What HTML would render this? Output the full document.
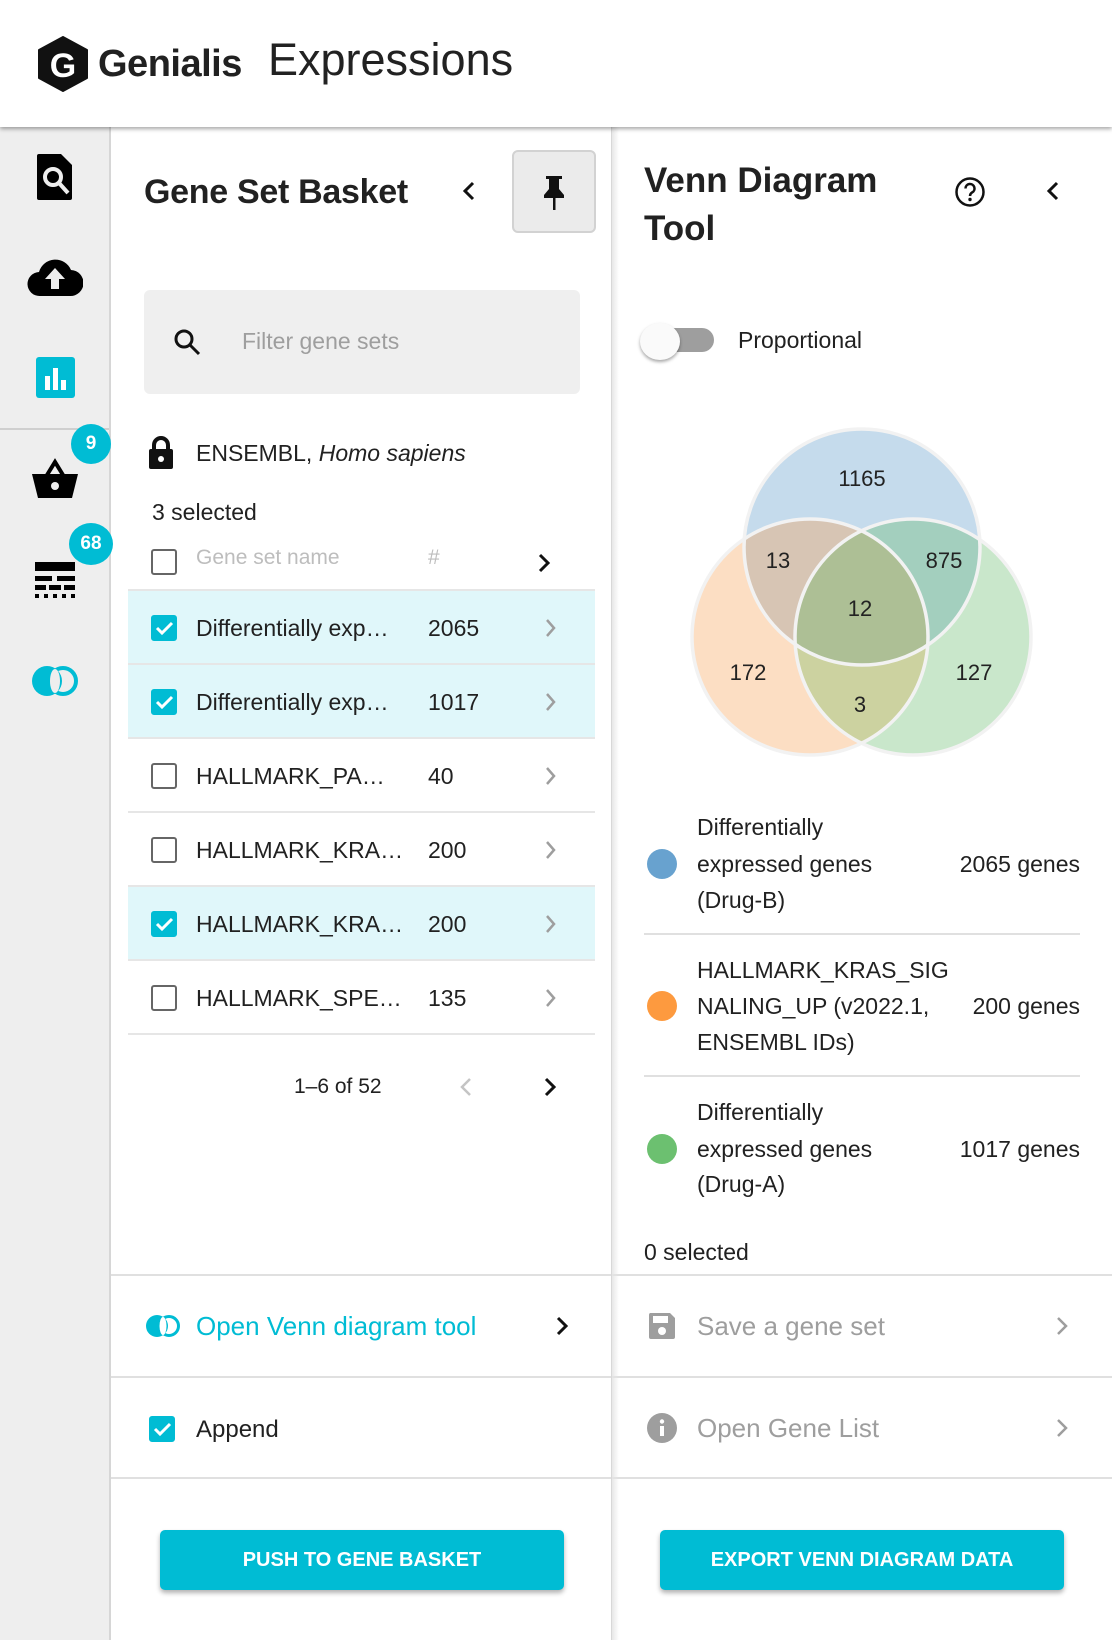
<!DOCTYPE html>
<html><head><meta charset="utf-8"><style>
*{margin:0;padding:0;box-sizing:border-box}
body{width:1112px;height:1640px;position:relative;overflow:hidden;background:#fff;font-family:"Liberation Sans",Roboto,sans-serif;color:#212121}
.a{position:absolute}
.t{position:absolute;white-space:nowrap;height:40px;line-height:40px}
.cb{position:absolute;width:26px;height:26px;border:2.5px solid #666;border-radius:3px;background:#fff}
.cb.on{background:#00bcd4;border-color:#00bcd4}
.row{position:absolute;left:128px;width:467px;height:74px;border-bottom:2px solid #e6e6e6}
.hl{background:#e0f7fa}
.badge{position:absolute;background:#00bcd4;color:#fff;font-weight:bold;border-radius:50%;text-align:center;font-size:19px}
.btn{position:absolute;top:1530px;height:60px;background:#00bcd4;color:#fff;font-weight:bold;font-size:20px;text-align:center;line-height:60px;border-radius:5px;box-shadow:0 3px 5px rgba(0,0,0,.3)}
.hr{position:absolute;height:2px;background:#e0e0e0}
</style></head><body>
<div class="a" style="left:0;top:0;width:1112px;height:127px;background:#fff;box-shadow:0 2px 4px rgba(0,0,0,.35);z-index:3"></div>
<svg class="a" style="left:37px;top:36px;z-index:4" width="52" height="56" viewBox="0 0 52 56"><polygon points="26,1 50,14 50,42 26,55 2,42 2,14" fill="#111" stroke="#111" stroke-width="2" stroke-linejoin="round"/><text x="26" y="41" text-anchor="middle" font-family="Liberation Sans" font-weight="bold" font-size="34" fill="#fff">G</text></svg>
<div class="t" style="left:98px;top:44px;font-size:38px;font-weight:bold;letter-spacing:-0.5px;z-index:4">Genialis</div>
<div class="t" style="left:268px;top:40px;font-size:45px;font-weight:300;color:#222;z-index:4">Expressions</div>

<div class="a" style="left:0;top:127px;width:111px;height:1513px;background:#eeeeee;border-right:2px solid #d6d6d6"></div>
<div class="a" style="left:0;top:428px;width:109px;height:2px;background:#cfcfcf"></div>
<svg class="a" style="left:36px;top:153px" width="38" height="48" viewBox="0 0 38 48"><path d="M3 1h22l11 11v33a2 2 0 0 1-2 2H3a2 2 0 0 1-2-2V3a2 2 0 0 1 2-2z" fill="#000"/><circle cx="17" cy="24" r="8" fill="none" stroke="#eee" stroke-width="4"/><line x1="23" y1="30" x2="32" y2="40" stroke="#eee" stroke-width="4"/></svg>
<svg class="a" style="left:27px;top:256px" width="56" height="42" viewBox="0 0 56 42"><path d="M13 40a12 12 0 0 1-1-24A17 17 0 0 1 44 14a13 13 0 0 1-1 26z" fill="#000"/><path d="M28 12l-10 11h6v10h8V23h6z" fill="#eee"/></svg>
<div class="a" style="left:36px;top:357px;width:39px;height:41px;background:#00bcd4;border-radius:3px"></div>
<div class="a" style="left:45px;top:376px;width:5px;height:14px;background:#fff"></div>
<div class="a" style="left:53px;top:368px;width:5px;height:22px;background:#fff"></div>
<div class="a" style="left:61px;top:380px;width:5px;height:10px;background:#fff"></div>
<svg class="a" style="left:31px;top:458px" width="48" height="42" viewBox="0 0 48 42"><path d="M16 17L24 4l8 13" fill="none" stroke="#000" stroke-width="4"/><path d="M1 16h46l-6 24H7z" fill="#000"/><circle cx="24" cy="28" r="4" fill="#eee"/></svg>
<div class="badge" style="left:71px;top:424px;width:40px;height:40px;line-height:40px">9</div>
<svg class="a" style="left:35px;top:562px" width="40" height="38" viewBox="0 0 40 38"><rect x="0" y="0" width="40" height="9" fill="#000"/><rect x="0" y="14" width="17" height="5" fill="#000"/><rect x="22" y="14" width="18" height="5" fill="#000"/><rect x="0" y="23" width="11" height="5" fill="#000"/><rect x="14" y="23" width="12" height="5" fill="#000"/><rect x="29" y="23" width="11" height="5" fill="#000"/><g fill="#000"><rect x="0" y="32" width="4" height="4"/><rect x="9" y="32" width="4" height="4"/><rect x="18" y="32" width="4" height="4"/><rect x="27" y="32" width="4" height="4"/><rect x="36" y="32" width="4" height="4"/></g></svg>
<div class="badge" style="left:69px;top:523px;width:44px;height:42px;line-height:42px">68</div>
<svg class="a" style="left:31px;top:665px" width="48" height="32" viewBox="0 0 48 32"><circle cx="16" cy="16" r="15" fill="#00bcd4"/><circle cx="32" cy="16" r="13" fill="none" stroke="#00bcd4" stroke-width="4"/><ellipse cx="24" cy="16" rx="5" ry="12" fill="#eee"/></svg>

<div class="t" style="left:144px;top:172px;font-size:34px;font-weight:bold;letter-spacing:-0.3px">Gene Set Basket</div>
<svg class="a" style="left:462px;top:181px" width="14" height="20" viewBox="0 0 14 20"><path d="M11 2L3 10l8 8" fill="none" stroke="#111" stroke-width="3"/></svg>
<div class="a" style="left:512px;top:150px;width:84px;height:83px;background:#ebebeb;border:2px solid #d2d2d2;border-radius:6px"></div>
<svg class="a" style="left:541px;top:175px" width="26" height="36" viewBox="0 0 26 36"><path d="M5 1h16v3h-3v10l5 6v3H3v-3l5-6V4H5z" fill="#111"/><rect x="12" y="22" width="2.5" height="13" fill="#111"/></svg>
<div class="a" style="left:144px;top:290px;width:436px;height:104px;background:#efefef;border-radius:6px"></div>
<svg class="a" style="left:173px;top:328px" width="30" height="30" viewBox="0 0 30 30"><circle cx="11" cy="11" r="8" fill="none" stroke="#111" stroke-width="3"/><line x1="17" y1="17" x2="26" y2="26" stroke="#111" stroke-width="3"/></svg>
<div class="t" style="left:242px;top:321px;font-size:23px;color:#9e9e9e">Filter gene sets</div>
<svg class="a" style="left:148px;top:436px" width="26" height="34" viewBox="0 0 26 34"><path d="M6 14V9a7 7 0 0 1 14 0v5" fill="none" stroke="#111" stroke-width="4"/><rect x="1" y="13" width="24" height="20" rx="2" fill="#111"/><circle cx="13" cy="23" r="3" fill="#fff"/></svg>
<div class="t" style="left:196px;top:433px;font-size:23px">ENSEMBL, <i>Homo sapiens</i></div>
<div class="t" style="left:152px;top:492px;font-size:23px">3 selected</div>
<div class="cb" style="left:151px;top:549px"></div>
<div class="t" style="left:196px;top:538px;font-size:21px;color:#bdbdbd">Gene set name</div>
<div class="t" style="left:428px;top:538px;font-size:21px;color:#bdbdbd">#</div>
<svg class="a" style="left:537px;top:553px" width="14" height="20" viewBox="0 0 14 20"><path d="M3 2l8 8-8 8" fill="none" stroke="#111" stroke-width="3"/></svg>
<div class="a" style="left:128px;top:589px;width:467px;height:2px;background:#e6e6e6"></div>

<div class="row hl" style="top:591px"></div>
<div class="row hl" style="top:665px"></div>
<div class="row" style="top:739px"></div>
<div class="row" style="top:813px"></div>
<div class="row hl" style="top:887px"></div>
<div class="row" style="top:961px"></div>

<div class="cb on" style="left:151px;top:615px"></div><svg class="a" style="left:154px;top:619px" width="20" height="18"><path d="M3 9l5 5 10-10" fill="none" stroke="#fff" stroke-width="3"/></svg>
<div class="t" style="left:196px;top:608px;font-size:23px">Differentially exp…</div><div class="t" style="left:428px;top:608px;font-size:23px">2065</div>
<div class="cb on" style="left:151px;top:689px"></div><svg class="a" style="left:154px;top:693px" width="20" height="18"><path d="M3 9l5 5 10-10" fill="none" stroke="#fff" stroke-width="3"/></svg>
<div class="t" style="left:196px;top:682px;font-size:23px">Differentially exp…</div><div class="t" style="left:428px;top:682px;font-size:23px">1017</div>
<div class="cb" style="left:151px;top:763px"></div>
<div class="t" style="left:196px;top:756px;font-size:23px">HALLMARK_PA…</div><div class="t" style="left:428px;top:756px;font-size:23px">40</div>
<div class="cb" style="left:151px;top:837px"></div>
<div class="t" style="left:196px;top:830px;font-size:23px">HALLMARK_KRA…</div><div class="t" style="left:428px;top:830px;font-size:23px">200</div>
<div class="cb on" style="left:151px;top:911px"></div><svg class="a" style="left:154px;top:915px" width="20" height="18"><path d="M3 9l5 5 10-10" fill="none" stroke="#fff" stroke-width="3"/></svg>
<div class="t" style="left:196px;top:904px;font-size:23px">HALLMARK_KRA…</div><div class="t" style="left:428px;top:904px;font-size:23px">200</div>
<div class="cb" style="left:151px;top:985px"></div>
<div class="t" style="left:196px;top:978px;font-size:23px">HALLMARK_SPE…</div><div class="t" style="left:428px;top:978px;font-size:23px">135</div>
<svg class="a" style="left:544px;top:618px" width="14" height="460" viewBox="0 0 14 460" fill="none" stroke="#9e9e9e" stroke-width="2.5"><path d="M3 2l7 8-7 8"/><path d="M3 76l7 8-7 8"/><path d="M3 150l7 8-7 8"/><path d="M3 224l7 8-7 8"/><path d="M3 298l7 8-7 8"/><path d="M3 372l7 8-7 8"/></svg>

<div class="t" style="left:294px;top:1067px;font-size:21px">1–6 of 52</div>
<svg class="a" style="left:459px;top:1077px" width="14" height="20"><path d="M11 2L3 10l8 8" fill="none" stroke="#c4c4c4" stroke-width="2.5"/></svg>
<svg class="a" style="left:543px;top:1077px" width="14" height="20"><path d="M3 2l8 8-8 8" fill="none" stroke="#111" stroke-width="3"/></svg>

<div class="hr" style="left:111px;top:1274px;width:1001px"></div>
<div class="hr" style="left:111px;top:1376px;width:1001px"></div>
<div class="hr" style="left:111px;top:1477px;width:1001px"></div>

<svg class="a" style="left:145px;top:1314px" width="36" height="24" viewBox="0 0 36 24"><circle cx="12" cy="12" r="11" fill="#00bcd4"/><circle cx="24" cy="12" r="9.5" fill="none" stroke="#00bcd4" stroke-width="3"/><ellipse cx="18" cy="12" rx="3.5" ry="9" fill="#fff"/></svg>
<div class="t" style="left:196px;top:1306px;font-size:26px;color:#00bcd4">Open Venn diagram tool</div>
<svg class="a" style="left:555px;top:1316px" width="14" height="20"><path d="M3 2l8 8-8 8" fill="none" stroke="#111" stroke-width="3"/></svg>
<div class="cb on" style="left:149px;top:1416px"></div><svg class="a" style="left:152px;top:1420px" width="20" height="18"><path d="M3 9l5 5 10-10" fill="none" stroke="#fff" stroke-width="3"/></svg>
<div class="t" style="left:196px;top:1410px;font-size:24px">Append</div>
<div class="btn" style="left:160px;width:404px">PUSH TO GENE BASKET</div>

<div class="a" style="left:611px;top:127px;width:8px;height:1513px;background:linear-gradient(to right,#e4e4e4,rgba(255,255,255,0))"></div>
<div class="a" style="left:611px;top:127px;width:1px;height:1513px;background:#d8d8d8"></div>
<div class="t" style="left:644px;top:161px;font-size:35px;font-weight:bold">Venn Diagram</div>
<div class="t" style="left:644px;top:209px;font-size:35px;font-weight:bold">Tool</div>
<svg class="a" style="left:954px;top:176px" width="32" height="32" viewBox="0 0 32 32"><circle cx="16" cy="16" r="13.5" fill="none" stroke="#111" stroke-width="2.5"/><path d="M11.5 12.5a4.5 4.5 0 1 1 6.5 4c-1.5 1-2 1.8-2 3.5" fill="none" stroke="#111" stroke-width="2.5"/><circle cx="16" cy="23.5" r="1.7" fill="#111"/></svg>
<svg class="a" style="left:1046px;top:181px" width="14" height="20"><path d="M11 2L3 10l8 8" fill="none" stroke="#111" stroke-width="3"/></svg>
<div class="a" style="left:656px;top:328px;width:58px;height:24px;background:#9e9e9e;border-radius:12px"></div>
<div class="a" style="left:640px;top:323px;width:40px;height:37px;background:#fafafa;border-radius:50%;box-shadow:0 2px 3px rgba(0,0,0,.35)"></div>
<div class="t" style="left:738px;top:320px;font-size:23px">Proportional</div>

<svg class="a" style="left:600px;top:400px" width="512" height="380" viewBox="600 400 512 380" font-family="Liberation Sans" font-size="22" fill="#222" text-anchor="middle">
<defs>
<clipPath id="cT"><circle cx="862" cy="547" r="118"/></clipPath>
<clipPath id="cL"><circle cx="810" cy="637" r="118"/></clipPath>
<clipPath id="cR"><circle cx="913" cy="637" r="118"/></clipPath>
</defs>
<circle cx="862" cy="547" r="118" fill="#c5dbec"/>
<circle cx="810" cy="637" r="118" fill="#fcdec3"/>
<circle cx="913" cy="637" r="118" fill="#c9e7cb"/>
<circle cx="862" cy="547" r="118" fill="#d7c5b4" clip-path="url(#cL)"/>
<circle cx="862" cy="547" r="118" fill="#a3cfbe" clip-path="url(#cR)"/>
<circle cx="810" cy="637" r="118" fill="#ccd2a0" clip-path="url(#cR)"/>
<g clip-path="url(#cT)"><circle cx="810" cy="637" r="118" fill="#adbf95" clip-path="url(#cR)"/></g>
<g fill="none" stroke="#f2f2f2" stroke-width="3.5">
<circle cx="862" cy="547" r="118"/><circle cx="810" cy="637" r="118"/><circle cx="913" cy="637" r="118"/></g>
<text x="862" y="486">1165</text>
<text x="778" y="568">13</text>
<text x="944" y="568">875</text>
<text x="860" y="616">12</text>
<text x="748" y="680">172</text>
<text x="974" y="680">127</text>
<text x="860" y="712">3</text>
</svg>

<div class="a" style="left:647px;top:849px;width:30px;height:30px;border-radius:50%;background:#68a2cf"></div>
<div class="t" style="left:697px;top:807px;font-size:23px">Differentially</div>
<div class="t" style="left:697px;top:844px;font-size:23px">expressed genes</div>
<div class="t" style="left:697px;top:880px;font-size:23px">(Drug-B)</div>
<div class="t" style="right:32px;top:844px;font-size:23px">2065 genes</div>
<div class="hr" style="left:644px;top:933px;width:436px"></div>
<div class="a" style="left:647px;top:991px;width:30px;height:30px;border-radius:50%;background:#fd9a3f"></div>
<div class="t" style="left:697px;top:950px;font-size:23px">HALLMARK_KRAS_SIG</div>
<div class="t" style="left:697px;top:986px;font-size:23px">NALING_UP (v2022.1,</div>
<div class="t" style="left:697px;top:1022px;font-size:23px">ENSEMBL IDs)</div>
<div class="t" style="right:32px;top:986px;font-size:23px">200 genes</div>
<div class="hr" style="left:644px;top:1075px;width:436px"></div>
<div class="a" style="left:647px;top:1134px;width:30px;height:30px;border-radius:50%;background:#6cc070"></div>
<div class="t" style="left:697px;top:1092px;font-size:23px">Differentially</div>
<div class="t" style="left:697px;top:1129px;font-size:23px">expressed genes</div>
<div class="t" style="left:697px;top:1164px;font-size:23px">(Drug-A)</div>
<div class="t" style="right:32px;top:1129px;font-size:23px">1017 genes</div>
<div class="t" style="left:644px;top:1232px;font-size:23px">0 selected</div>

<svg class="a" style="left:647px;top:1311px" width="30" height="30" viewBox="0 0 30 30"><path d="M3 2h20l5 5v19a2 2 0 0 1-2 2H4a2 2 0 0 1-2-2V4a2 2 0 0 1 1-2z" fill="#9e9e9e"/><rect x="6" y="5" width="15" height="7" fill="#fff"/><circle cx="15" cy="20" r="4" fill="#fff"/></svg>
<div class="t" style="left:697px;top:1306px;font-size:26px;color:#9e9e9e">Save a gene set</div>
<svg class="a" style="left:1055px;top:1316px" width="14" height="20"><path d="M3 2l8 8-8 8" fill="none" stroke="#9e9e9e" stroke-width="2.5"/></svg>
<svg class="a" style="left:647px;top:1413px" width="30" height="30" viewBox="0 0 30 30"><circle cx="15" cy="15" r="15" fill="#9e9e9e"/><rect x="13" y="13" width="4" height="10" fill="#fff"/><circle cx="15" cy="8.5" r="2.2" fill="#fff"/></svg>
<div class="t" style="left:697px;top:1408px;font-size:26px;color:#9e9e9e">Open Gene List</div>
<svg class="a" style="left:1055px;top:1418px" width="14" height="20"><path d="M3 2l8 8-8 8" fill="none" stroke="#9e9e9e" stroke-width="2.5"/></svg>
<div class="btn" style="left:660px;width:404px">EXPORT VENN DIAGRAM DATA</div>
</body></html>
